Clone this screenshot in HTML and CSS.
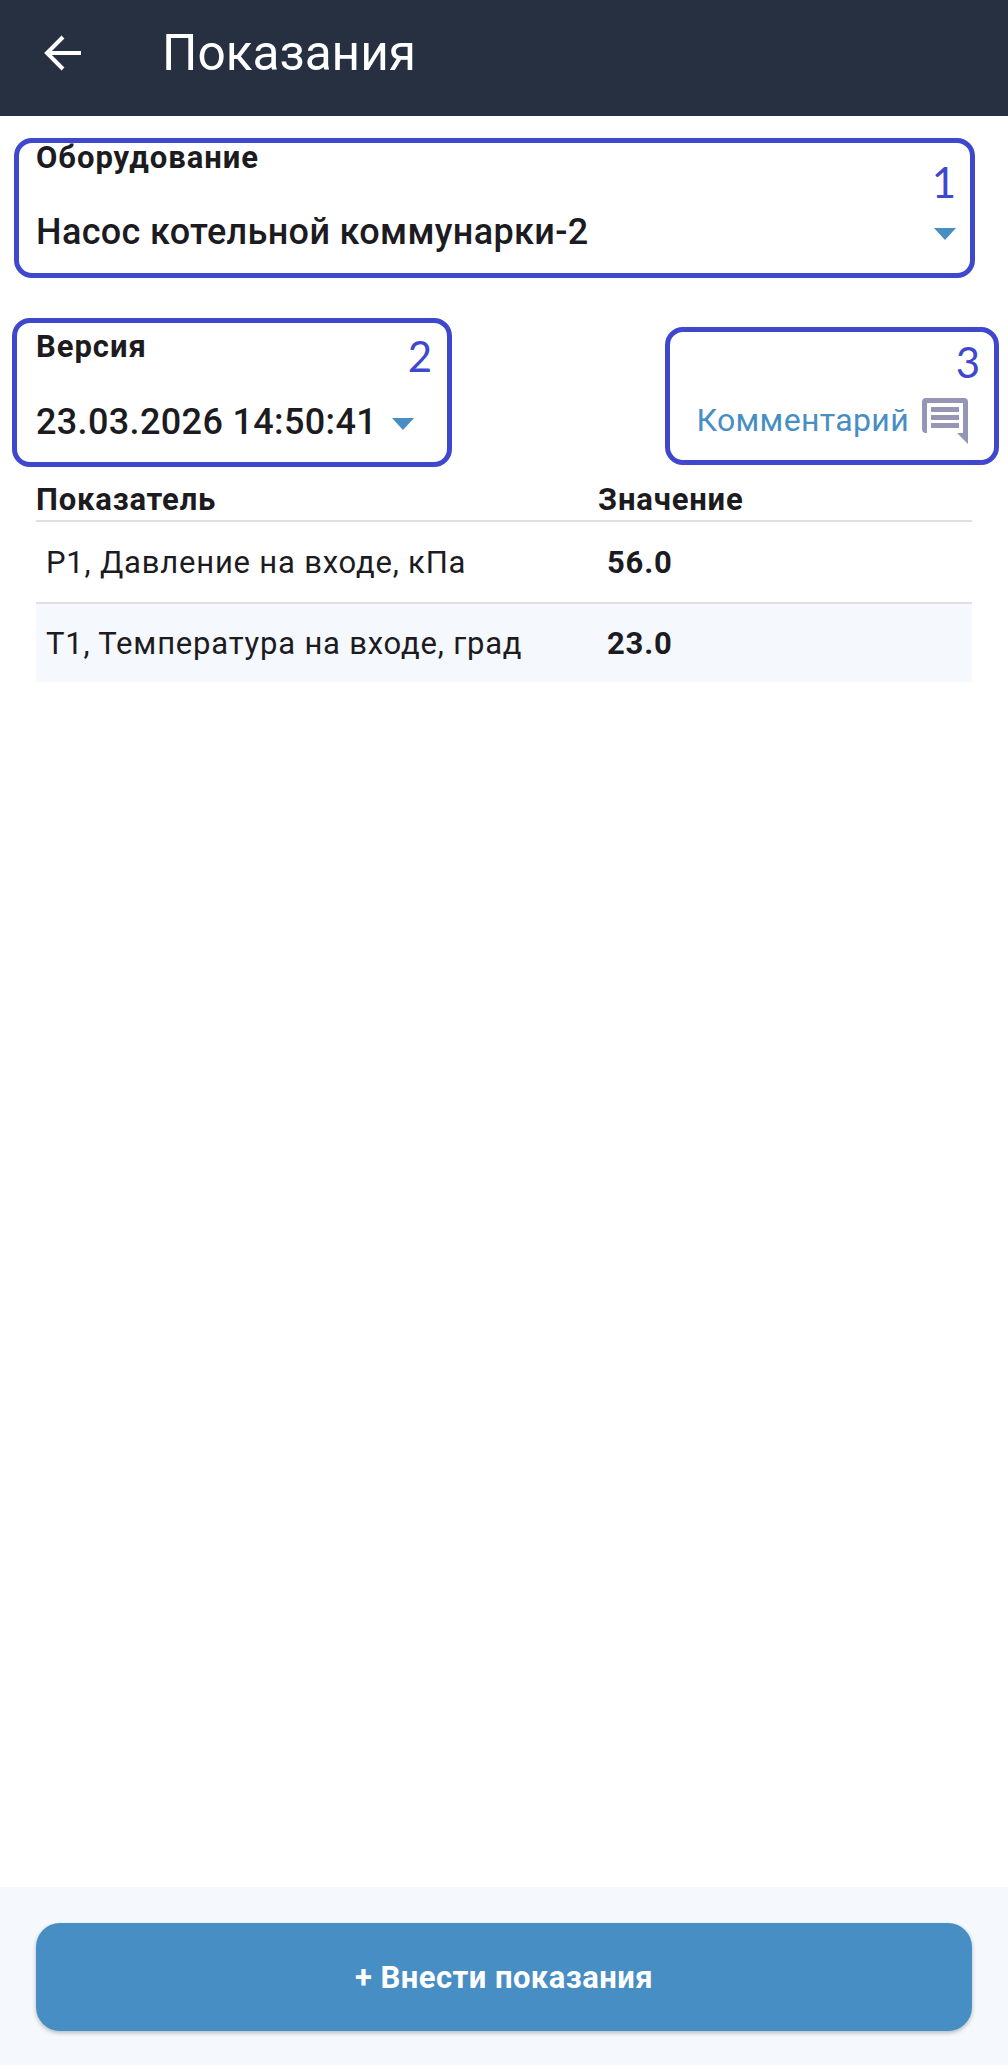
FILE: index.html
```html
<!DOCTYPE html>
<html lang="ru">
<head>
<meta charset="utf-8">
<title>Показания</title>
<link rel="stylesheet" href="styles.css">
</head>
<body>
<div class="screen">
  <header class="appbar">
    <svg class="back" viewBox="0 0 38 38" width="38" height="38"><path d="M37 19H4M19 3 3 19l16 16" fill="none" stroke="#fff" stroke-width="4"/></svg>
    <h1 class="title">Показания</h1>
  </header>
  <main class="content">
    <section class="field equipment">
      <div class="label">Оборудование</div>
      <div class="select-row wide">
        <span class="value">Насос котельной коммунарки-2</span>
        <span class="caret"></span>
      </div>
    </section>
    <section class="version-row">
      <div class="field">
        <div class="label">Версия</div>
        <div class="select-row">
          <span class="value">23.03.2026 14:50:41</span>
          <span class="caret"></span>
        </div>
      </div>
      <div class="comment">
        <span class="comment-text">Комментарий</span>
        <svg class="comment-icon" viewBox="0 0 46 46" width="46" height="46"><path d="M4 0h38a4 4 0 0 1 4 4v42l-11-11H4a4 4 0 0 1-4-4V4a4 4 0 0 1 4-4Z" fill="#9596b5"/><path d="M5 5h36v30H5z" fill="#fff"/><path d="M9 9h28v5H9zM9 17h28v5H9zM9 25h28v5H9z" fill="#9596b5"/></svg>
      </div>
    </section>
    <section class="table">
      <div class="thead">
        <div class="c1">Показатель</div>
        <div class="c2">Значение</div>
      </div>
      <div class="row">
        <div class="c1">Р1, Давление на входе, кПа</div>
        <div class="c2">56.0</div>
      </div>
      <div class="row alt">
        <div class="c1">Т1, Температура на входе, град</div>
        <div class="c2">23.0</div>
      </div>
    </section>
  </main>
  <footer class="footer">
    <button class="action">+ Внести показания</button>
  </footer>
  <div class="mark mark1"><span class="num">1</span></div>
  <div class="mark mark2"><span class="num">2</span></div>
  <div class="mark mark3"><span class="num">3</span></div>
</div>
</body>
</html>
```
FILE: styles.css
```css
* { box-sizing: border-box; }
html, body { margin: 0; padding: 0; }
body { font-family: Roboto, "Liberation Sans", sans-serif; color: #1c1b1f; background: #fff; }
.screen { position: relative; width: 1008px; height: 2065px; display: flex; flex-direction: column; overflow: hidden; }
.appbar { height: 116px; background: #263040; display: flex; align-items: center; padding: 0 0 10px 44px; flex: none; }
.back { display: block; flex: none; }
.title { margin: 0 0 0 80px; font-size: 49.6px; font-weight: 400; color: #fff; line-height: 56px; }
.content { flex: 1; padding: 24px 36px 0; }
.label { font-size: 31px; font-weight: 700; line-height: 34px; letter-spacing: 0.95px; }
.equipment { height: 190px; padding-top: 1px; }
.select-row { display: flex; align-items: center; margin-top: 38px; height: 40px; gap: 15px; }
.select-row.wide { justify-content: space-between; padding-right: 16px; margin-top: 37px; }
.value { font-size: 36px; font-weight: 500; line-height: 40px; letter-spacing: 0.35px; }
.caret { width: 0; height: 0; margin-top: 4px; border-left: 11px solid transparent; border-right: 11px solid transparent; border-top: 12px solid #478ec4; }
.version-row { display: flex; justify-content: space-between; align-items: flex-start; height: 152px; }
.comment { align-self: flex-end; display: flex; align-items: center; gap: 13px; margin-right: 4px; padding-bottom: 38px; }
.comment-text { font-size: 32px; color: #478ec4; line-height: 40px; letter-spacing: 0.35px; }
.comment-icon { display: block; margin-top: 2px; }
.table { font-size: 31px; letter-spacing: 0.8px; }
.thead { display: grid; grid-template-columns: 562px 1fr; height: 40px; padding-top: 1px; font-size: 31px; font-weight: 700; border-bottom: 2px solid #e0e0e0; line-height: 34px; letter-spacing: 0.8px; }
.row { display: grid; grid-template-columns: 562px 1fr; height: 82px; align-items: center; border-bottom: 2px solid #e0e0e0; }
.row .c1 { padding-left: 10px; }
.row .c2 { padding-left: 9px; font-weight: 700; }
.row.alt { background: #f5f8fc; border-bottom: 0; height: 78px; }
.footer { flex: none; height: 178px; background: #f5f8fc; padding: 36px 36px 0; }
.action { display: block; width: 936px; height: 108px; border: 0; border-radius: 24px; background: #478ec4; color: #fff; font-family: inherit; font-size: 31px; font-weight: 700; letter-spacing: 0.45px; box-shadow: 0 2px 4px rgba(0,0,0,.25); }
.mark { position: absolute; border: 5px solid #3f48cc; border-radius: 18px; }
.mark1 { left: 14px; top: 138px; width: 961px; height: 140px; }
.mark2 { left: 12px; top: 318px; width: 440px; height: 149px; }
.mark3 { left: 665px; top: 327px; width: 334px; height: 138px; }
.num { position: absolute; font-family: Lato, sans-serif; font-size: 42px; line-height: 42px; color: #3f48cc; }
.mark1 .num { right: 14px; top: 18px; }
.mark2 .num { right: 15px; top: 12px; }
.mark3 .num { right: 14px; top: 9px; }
```
